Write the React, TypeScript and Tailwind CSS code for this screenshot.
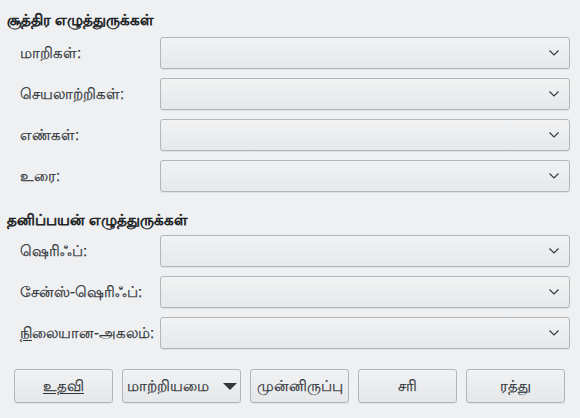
import { ReactNode } from "react";

function Chevron() {
  return (
    <svg width="10" height="6" viewBox="0 0 10 6" className="text-[#31363b]">
      <path d="M0.5 0.5 L5 5 L9.5 0.5" fill="none" stroke="currentColor" strokeWidth="1.1" />
    </svg>
  );
}

function Combo() {
  return (
    <div className="h-[32px] rounded-[3px] border border-[#b4b5b6] bg-gradient-to-b from-[#f1f2f3] to-[#e7e8e9] shadow-[0_1px_0_rgba(0,0,0,0.06)] flex items-center justify-end pr-[10px]">
      <Chevron />
    </div>
  );
}

function Row({ label }: { label: ReactNode }) {
  return (
    <div className="grid grid-cols-[140px_1fr] items-center">
      <span className="text-[15px] text-[#31363b] [-webkit-text-stroke:0.25px_#31363b]">{label}</span>
      <Combo />
    </div>
  );
}

function Button({ children, w = "w-[99px]" }: { children: ReactNode; w?: string }) {
  return (
    <button
      className={`${w} h-[34px] rounded-[3px] border border-[#b4b5b6] bg-gradient-to-b from-[#f1f2f3] to-[#e6e7e8] shadow-[0_1px_0_rgba(0,0,0,0.06)] flex items-center justify-center text-[15px] text-[#31363b] [-webkit-text-stroke:0.25px_#31363b]`}
    >
      {children}
    </button>
  );
}

function Heading({ children }: { children: ReactNode }) {
  return (
    <h2 className="h-[20px] pl-[7px] text-[15px] font-normal text-[#232629] leading-[20px] [-webkit-text-stroke:0.75px_#232629]">
      {children}
    </h2>
  );
}

export default function App() {
  return (
    <div
      className="w-[580px] h-[418px] bg-[#eff0f1] flex flex-col overflow-hidden pt-[10px]"
      style={{ fontFamily: '"Liberation Sans", sans-serif' }}
    >
      {/* Formula fonts */}
      <Heading>சூத்திர எழுத்துருக்கள்</Heading>
      <div className="mt-[7px] pl-[20px] pr-[10px] flex flex-col gap-[9px]">
        <Row label="மாறிகள்:" />
        <Row label="செயலாற்றிகள்:" />
        <Row label="எண்கள்:" />
        <Row label="உரை:" />
      </div>

      {/* Custom fonts */}
      <div className="mt-[18px]">
        <Heading>தனிப்பயன் எழுத்துருக்கள்</Heading>
      </div>
      <div className="mt-[5px] pl-[20px] pr-[10px] flex flex-col gap-[9px]">
        <Row label="ஷெரிஃப்:" />
        <Row label="சேன்ஸ்-ஷெரிஃப்:" />
        <Row
          label={
            <>
              <span className="underline underline-offset-2">நி</span>லையான-அகலம்:
            </>
          }
        />
      </div>

      {/* Buttons */}
      <div className="mt-[20px] pl-[14px] flex gap-[9px]">
        <Button>
          <span className="underline underline-offset-2">உதவி</span>
        </Button>
        <Button w="w-[119px]">
          <span className="flex items-center gap-[14px]">
            மாற்றியமை
            <svg width="14" height="7" viewBox="0 0 14 7">
              <path d="M0 0 H14 L7 7 Z" fill="#31363b" />
            </svg>
          </span>
        </Button>
        <Button>முன்னிருப்பு</Button>
        <Button>சரி</Button>
        <Button>ரத்து</Button>
      </div>
    </div>
  );
}
